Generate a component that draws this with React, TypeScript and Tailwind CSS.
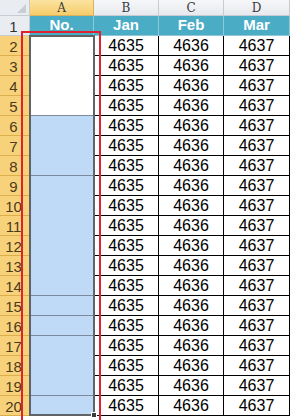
const font = "font-['Liberation_Sans',Arial,sans-serif]";

const groups = [
  { h: "h-[80px]", bg: "bg-white" },
  { h: "h-[60px]", bg: "bg-[#bfdaf7]" },
  { h: "h-[120px]", bg: "bg-[#bfdaf7]" },
  { h: "h-[20px]", bg: "bg-[#bfdaf7]" },
  { h: "h-[20px]", bg: "bg-[#bfdaf7]" },
  { h: "h-[60px]", bg: "bg-[#bfdaf7]" },
  { h: "h-[20px]", bg: "bg-[#bfdaf7]" },
];

const dataRows = Array.from({ length: 19 }, (_, i) => i + 2);

const columns = [
  { letter: "B", title: "Jan", value: "4635", w: "w-[65px]" },
  { letter: "C", title: "Feb", value: "4636", w: "w-[65px]" },
  { letter: "D", title: "Mar", value: "4637", w: "w-[66px]" },
];

function ColHeader({ letter, yellow }: { letter: string; yellow?: boolean }) {
  return (
    <div
      className={`h-[16px] flex items-center justify-center border-r border-b text-[12px] text-[#3b3b3b] font-['DejaVu_Serif',serif] leading-none ${
        yellow
          ? "bg-gradient-to-b from-[#fbe3a0] to-[#f6cd6a] border-[#d9b25a]"
          : "bg-gradient-to-b from-[#f6f7f9] to-[#e6e9ee] border-[#c8ccd2]"
      }`}
    >
      {letter}
    </div>
  );
}

export default function App() {
  return (
    <div className={`relative w-[292px] h-[420px] overflow-hidden bg-white ${font}`}>
      <div className="flex">
        {/* row headers */}
        <div className="w-[30px] flex flex-col">
          <div className="h-[16px] bg-[#e9ecf0] border-r border-b border-[#c8ccd2] relative">
            <div className="absolute right-[3px] bottom-[2px] w-0 h-0 border-l-[9px] border-l-transparent border-b-[9px] border-b-[#c9ced6]" />
          </div>
          <div className="h-[20px] bg-[#e9ecf0] border-r border-b border-[#c8ccd2] flex items-end justify-center pb-[1px] pr-[2px] text-[15px] text-[#333] leading-none">
            1
          </div>
          {dataRows.map((r) => (
            <div
              key={r}
              className="h-[20px] bg-[#f8d27a] border-r border-b border-[#dcae4c] flex items-end justify-center pb-[1px] pr-[2px] text-[15px] text-[#4b3a1c] leading-none"
            >
              {r}
            </div>
          ))}
        </div>

        {/* column A */}
        <div className="w-[64px] flex flex-col">
          <ColHeader letter="A" yellow />
          <div className="h-[20px] bg-[#4bacc6] border-r border-b border-[#8fc9d9] flex items-center justify-center text-white font-bold text-[15px]">
            No.
          </div>
          <div className="flex flex-col">
            {groups.map((g, i) => (
              <div key={i} className={`${g.h} ${g.bg} border-b border-[#7d8c9c]`} />
            ))}
          </div>
        </div>

        {/* data columns */}
        {columns.map((c) => (
          <div key={c.letter} className={`${c.w} flex flex-col`}>
            <ColHeader letter={c.letter} />
            <div className="h-[20px] bg-[#4bacc6] border-r border-b border-[#8fc9d9] flex items-center justify-center text-white font-bold text-[15px]">
              {c.title}
            </div>
            {dataRows.map((r) => (
              <div
                key={r}
                className="h-[20px] border-r border-b border-black flex items-center justify-center text-[16px] text-black"
              >
                {c.value}
              </div>
            ))}
          </div>
        ))}
      </div>

      {/* selection border A2:A20 */}
      <div className="absolute left-[29px] top-[35px] w-[66px] h-[381px] border-2 border-[#5f6368] pointer-events-none" />
      <div className="absolute left-[91px] top-[412px] w-[6px] h-[6px] bg-[#3c3c3c] border border-white" />

      {/* red highlight */}
      <div className="absolute left-[21px] top-[31px] w-[80px] h-[400px] border-2 border-[#e0222e] pointer-events-none" />
    </div>
  );
}
